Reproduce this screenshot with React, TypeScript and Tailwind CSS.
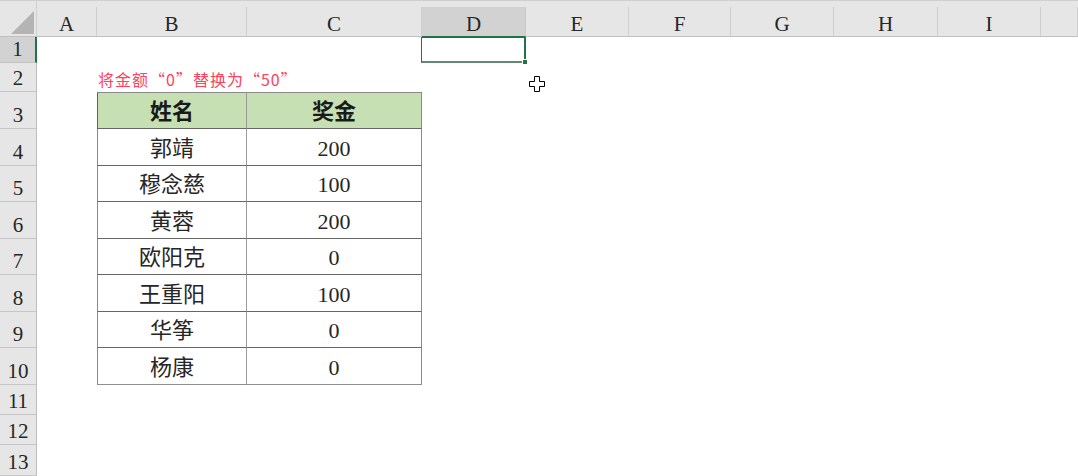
import React from "react";

const cols = ["A", "B", "C", "D", "E", "F", "G", "H", "I", ""];
const data: [string, string][] = [
  ["郭靖", "200"],
  ["穆念慈", "100"],
  ["黄蓉", "200"],
  ["欧阳克", "0"],
  ["王重阳", "100"],
  ["华筝", "0"],
  ["杨康", "0"],
];

const serif = "font-['Liberation_Serif','Noto_Sans_CJK_SC',serif]";

function RowHead({ n, active }: { n: number; active?: boolean }) {
  return (
    <div
      className={
        active
          ? "flex items-end justify-center bg-[#d2d2d2] border-b border-[#c3c3c3] border-r-2 border-r-[#217346] text-[21px] leading-[24px] text-[#262626] font-['Liberation_Serif',serif]"
          : "flex items-end justify-center bg-[#e6e6e6] border-b border-[#c6c6c6] border-r border-r-[#bdbdbd] text-[21px] leading-[24px] text-[#262626] font-['Liberation_Serif',serif]"
      }
    >
      <span className="pb-[1px]">{n}</span>
    </div>
  );
}

function Blank({ count }: { count: number }) {
  return (
    <>
      {Array.from({ length: count }).map((_, i) => (
        <div key={i} className="bg-white" />
      ))}
    </>
  );
}

export default function App() {
  return (
    <div className="relative w-[1078px] h-[476px] overflow-hidden bg-white">
      <div className="grid grid-cols-[37px_60px_150px_175px_104px_103px_102px_103px_104px_103px_1fr] grid-rows-[7px_30px_26px_29px_37px_37px_36px_37px_36px_37px_36px_37px_30px_30px_31px] h-full">
        {/* corner */}
        <div className="row-span-2 relative bg-[#e6e6e6] border-t border-t-[#cfcfcf] border-b border-b-[#bfbfbf] border-r border-r-[#d0d0d0]">
          <svg className="absolute left-[11px] top-[10px]" width="23" height="23" viewBox="0 0 23 23">
            <polygon points="23,0 23,23 0,23" fill="#b4b4b4" />
          </svg>
        </div>
        {/* top strip */}
        <div className="col-span-10 bg-[#e6e6e6] border-t border-t-[#cfcfcf]" />
        {/* column headers */}
        {cols.map((c) => (
          <div
            key={c || "J"}
            className={
              c === "D"
                ? "flex items-end justify-center bg-[#d2d2d2] border-b border-b-[#217346] border-r border-r-[#c8c8c8] text-[21px] leading-[20px] text-[#262626] font-['Liberation_Serif',serif]"
                : "flex items-end justify-center bg-[#e6e6e6] border-b border-b-[#bfbfbf] border-r border-r-[#cfcfcf] text-[21px] leading-[20px] text-[#262626] font-['Liberation_Serif',serif]"
            }
          >
            <span className="pb-[2px]">{c}</span>
          </div>
        ))}

        {/* row 1 */}
        <RowHead n={1} active />
        <Blank count={3} />
        <div className="relative border border-[#217346] border-r-2 border-b-2 border-b-[#5f8a72] -ml-px">
          <div className="absolute -right-[4px] -bottom-[4px] w-[6px] h-[6px] bg-[#217346] border border-white" />
        </div>
        <Blank count={6} />

        {/* row 2 */}
        <RowHead n={2} />
        <div className="bg-white" />
        <div className="col-span-2 flex items-center pl-px pt-[3px] text-[16px] tracking-[1px] text-[#ff4060] font-['Noto_Sans_CJK_SC',sans-serif] whitespace-nowrap">
          将金额“0”替换为“50”
        </div>
        <Blank count={7} />

        {/* row 3 header */}
        <RowHead n={3} />
        <div className="bg-white" />
        <div className={`flex items-center justify-center pt-[1px] bg-[#c6e0b4] border-t border-l border-b border-r border-t-[#8a8a8a] border-l-[#4d6b63] border-b-[#666666] border-r-[#9a9a9a] text-[22px] font-bold text-[#1a1a1a] ${serif}`}>
          姓名
        </div>
        <div className={`flex items-center justify-center pt-[1px] bg-[#c6e0b4] border-t border-b border-r border-t-[#8a8a8a] border-b-[#666666] border-r-[#8a8a8a] text-[22px] font-bold text-[#1a1a1a] ${serif}`}>
          奖金
        </div>
        <Blank count={7} />

        {data.map(([name, amt], i) => (
          <React.Fragment key={name}>
            <RowHead n={i + 4} />
            <div className="bg-white" />
            <div
              className={
                i === data.length - 1
                  ? `flex items-center justify-center pt-[2px] border-l border-b border-r border-l-[#8a8a8a] border-b-[#8f8f8f] border-r-[#9a9a9a] text-[22px] text-[#262626] ${serif}`
                  : `flex items-center justify-center pt-[2px] border-l border-b border-r border-l-[#8a8a8a] border-b-[#666666] border-r-[#9a9a9a] text-[22px] text-[#262626] ${serif}`
              }
            >
              {name}
            </div>
            <div
              className={
                i === data.length - 1
                  ? `flex items-center justify-center pt-[2px] border-b border-r border-b-[#8f8f8f] border-r-[#8a8a8a] text-[22px] text-[#262626] ${serif}`
                  : `flex items-center justify-center pt-[2px] border-b border-r border-b-[#666666] border-r-[#8a8a8a] text-[22px] text-[#262626] ${serif}`
              }
            >
              {amt}
            </div>
            <Blank count={7} />
          </React.Fragment>
        ))}

        {[11, 12, 13].map((n) => (
          <React.Fragment key={n}>
            <RowHead n={n} />
            <Blank count={10} />
          </React.Fragment>
        ))}
      </div>

      {/* mouse cursor */}
      <svg className="absolute left-[529px] top-[76px]" width="16" height="16" viewBox="0 0 16 16">
        <path
          d="M5.5 0.5 H10.5 V5.5 H15.5 V10.5 H10.5 V15.5 H5.5 V10.5 H0.5 V5.5 H5.5 Z"
          fill="#ffffff"
          stroke="#000000"
          strokeWidth="1"
        />
      </svg>
    </div>
  );
}
